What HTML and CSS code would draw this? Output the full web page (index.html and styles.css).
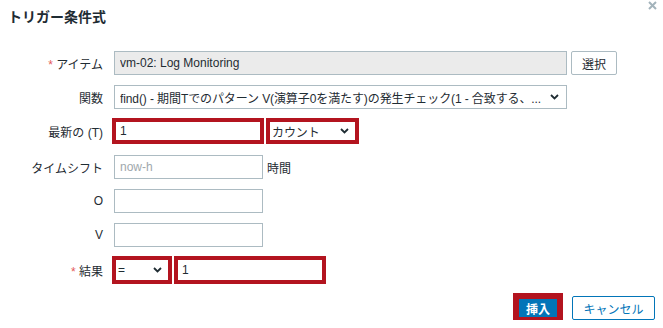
FILE: index.html
```html
<!DOCTYPE html>
<html lang="ja">
<head>
    <meta charset="UTF-8">
    <meta name="viewport" content="width=device-width, initial-scale=1.0">
    <title>トリガー条件式</title>
    <link rel="stylesheet" href="styles.css">
</head>
<body>
    <div class="dialog">
        <div class="dialog-head">
            <h4 class="dialog-title">トリガー条件式</h4>
            <button class="btn-close" title="閉じる">
                <svg width="9" height="9" viewBox="0 0 9 9"><path d="M1 1L8 8M8 1L1 8" stroke="#a3b3bb" stroke-width="2"/></svg>
            </button>
        </div>

        <div class="form">
            <div class="form-row">
                <label class="form-label"><span class="req">*</span> アイテム</label>
                <input type="text" class="input input-wide readonly" value="vm-02: Log Monitoring" readonly>
                <button class="btn-alt">選択</button>
            </div>
            <div class="form-row row-func">
                <label class="form-label">関数</label>
                <div class="select select-wide">
                    <span class="select-text">find() - 期間Tでのパターン V(演算子0を満たす)の発生チェック(1 - 合致する、...</span>
                    <svg class="chevron" width="9" height="6" viewBox="0 0 9 6"><path d="M1 1L4.5 4.5L8 1" fill="none" stroke="#1f2c33" stroke-width="1.8"/></svg>
                </div>
            </div>
            <div class="form-row row-hl">
                <label class="form-label">最新の (T)</label>
                <input type="text" class="input hl hl-first hl-input" value="1">
                <div class="select hl hl-count">
                    <span class="select-text">カウント</span>
                    <svg class="chevron" width="9" height="6" viewBox="0 0 9 6"><path d="M1 1L4.5 4.5L8 1" fill="none" stroke="#1f2c33" stroke-width="1.8"/></svg>
                </div>
            </div>
            <div class="form-row">
                <label class="form-label">タイムシフト</label>
                <input type="text" class="input input-short" placeholder="now-h">
                <span class="unit">時間</span>
            </div>
            <div class="form-row">
                <label class="form-label">O</label>
                <input type="text" class="input input-short">
            </div>
            <div class="form-row row-v">
                <label class="form-label">V</label>
                <input type="text" class="input input-short">
            </div>
            <div class="form-row row-result">
                <label class="form-label"><span class="req">*</span> 結果</label>
                <div class="select hl hl-first hl-op">
                    <span class="select-text">=</span>
                    <svg class="chevron" width="9" height="6" viewBox="0 0 9 6"><path d="M1 1L4.5 4.5L8 1" fill="none" stroke="#1f2c33" stroke-width="1.8"/></svg>
                </div>
                <input type="text" class="input hl hl-input" value="1">
            </div>
        </div>

        <div class="dialog-foot">
            <button class="btn btn-insert">挿入</button>
            <button class="btn btn-cancel">キャンセル</button>
        </div>
    </div>
</body>
</html>
```

FILE: styles.css
```css
body {
    margin: 0;
    font-family: "Liberation Sans", Arial, "Noto Sans CJK JP", sans-serif;
    font-size: 12px;
    color: #1f2c33;
    background-color: #fff;
}
.dialog {
    padding: 0 8px;
}
.dialog-head {
    display: flex;
    justify-content: space-between;
    align-items: flex-start;
}
.dialog-title {
    margin: 8px 0 0 0;
    font-size: 14px;
    line-height: 18px;
    font-weight: bold;
    color: #1f2c33;
}
.btn-close {
    margin: 1px -2px 0 0;
    padding: 0;
    border: none;
    background: none;
    width: 9px;
    height: 9px;
    line-height: 0;
}
.form {
    margin-top: 25px;
}
.form-row {
    display: flex;
    align-items: center;
    height: 24px;
    margin-bottom: 10px;
}
.row-func {
    margin-bottom: 9px;
}
.row-hl {
    height: 26px;
    margin-bottom: 11px;
}
.row-v {
    margin-bottom: 9px;
}
.row-result {
    height: 28px;
    margin-bottom: 12px;
}
.form-label {
    width: 95px;
    margin-right: 11px;
    text-align: right;
    white-space: nowrap;
}
.req {
    color: #e45959;
}
.input {
    box-sizing: border-box;
    height: 24px;
    margin: 0;
    padding: 0 5px;
    border: 1px solid #acbbc2;
    border-radius: 0;
    font-family: inherit;
    font-size: 12px;
    color: #1f2c33;
    background-color: #fff;
    outline: none;
}
.input::placeholder {
    color: #a0a8ad;
}
.input-wide {
    width: 453px;
}
.input-short {
    width: 149px;
}
.readonly {
    background-color: #ebebeb;
}
.unit {
    margin-left: 4px;
}
.select {
    box-sizing: border-box;
    display: flex;
    align-items: center;
    justify-content: space-between;
    height: 24px;
    padding: 0 7px 0 5px;
    border: 1px solid #acbbc2;
    background-color: #fff;
    white-space: nowrap;
    overflow: hidden;
}
.select-wide {
    width: 453px;
}
.select-text {
    overflow: hidden;
    letter-spacing: -0.1px;
}
.chevron {
    flex-shrink: 0;
    margin-left: 4px;
}
.hl {
    border: 4px solid #b3141f;
}
.hl-first {
    margin-left: -2px;
}
.hl-input {
    width: 152px;
    height: 100%;
    padding: 0 4px;
    margin-right: 2px;
}
.select.hl {
    height: 100%;
    padding: 0 6px 0 2px;
}
.hl-count {
    width: 93px;
}
.hl-op {
    width: 60px;
    margin-right: 2px;
}
.btn-alt {
    box-sizing: border-box;
    height: 24px;
    width: 46px;
    margin-left: 4px;
    padding: 0;
    border: 1px solid #acbbc2;
    border-radius: 2px;
    background-color: #fff;
    font-family: inherit;
    font-size: 12px;
    color: #1f2c33;
}
.dialog-foot {
    display: flex;
    justify-content: flex-end;
    gap: 12px;
}
.btn {
    box-sizing: border-box;
    height: 24px;
    padding: 0;
    border-radius: 2px;
    font-family: inherit;
    font-size: 12px;
}
.btn-insert {
    width: 44px;
    border: 3px solid #b3141f;
    outline: 3px solid #b3141f;
    border-radius: 0;
    background-color: #0275b8;
    color: #fff;
    font-weight: bold;
}
.btn-cancel {
    width: 83px;
    border: 1px solid #0275b8;
    background-color: #fff;
    color: #0275b8;
}
```
